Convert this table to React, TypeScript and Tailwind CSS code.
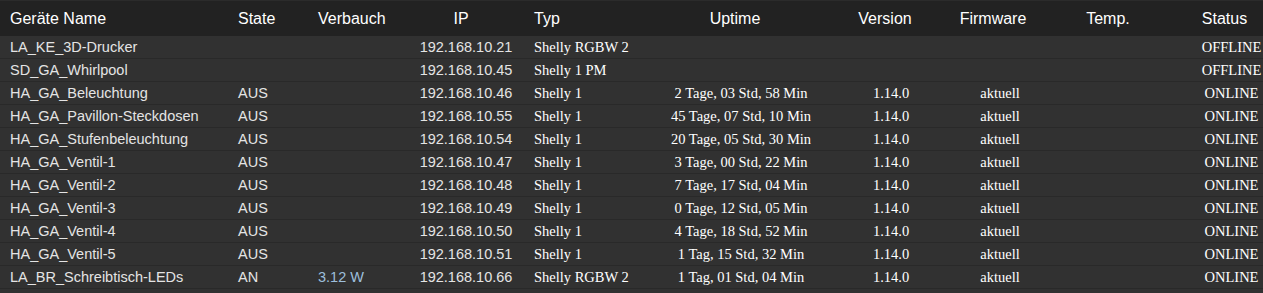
import React from "react";

type Device = {
  name: string;
  state?: string;
  power?: string;
  ip: string;
  typ: string;
  uptime?: string;
  version?: string;
  firmware?: string;
  status: string;
};

const devices: Device[] = [
  { name: "LA_KE_3D-Drucker", ip: "192.168.10.21", typ: "Shelly RGBW 2", status: "OFFLINE" },
  { name: "SD_GA_Whirlpool", ip: "192.168.10.45", typ: "Shelly 1 PM", status: "OFFLINE" },
  { name: "HA_GA_Beleuchtung", state: "AUS", ip: "192.168.10.46", typ: "Shelly 1", uptime: "2 Tage, 03 Std, 58 Min", version: "1.14.0", firmware: "aktuell", status: "ONLINE" },
  { name: "HA_GA_Pavillon-Steckdosen", state: "AUS", ip: "192.168.10.55", typ: "Shelly 1", uptime: "45 Tage, 07 Std, 10 Min", version: "1.14.0", firmware: "aktuell", status: "ONLINE" },
  { name: "HA_GA_Stufenbeleuchtung", state: "AUS", ip: "192.168.10.54", typ: "Shelly 1", uptime: "20 Tage, 05 Std, 30 Min", version: "1.14.0", firmware: "aktuell", status: "ONLINE" },
  { name: "HA_GA_Ventil-1", state: "AUS", ip: "192.168.10.47", typ: "Shelly 1", uptime: "3 Tage, 00 Std, 22 Min", version: "1.14.0", firmware: "aktuell", status: "ONLINE" },
  { name: "HA_GA_Ventil-2", state: "AUS", ip: "192.168.10.48", typ: "Shelly 1", uptime: "7 Tage, 17 Std, 04 Min", version: "1.14.0", firmware: "aktuell", status: "ONLINE" },
  { name: "HA_GA_Ventil-3", state: "AUS", ip: "192.168.10.49", typ: "Shelly 1", uptime: "0 Tage, 12 Std, 05 Min", version: "1.14.0", firmware: "aktuell", status: "ONLINE" },
  { name: "HA_GA_Ventil-4", state: "AUS", ip: "192.168.10.50", typ: "Shelly 1", uptime: "4 Tage, 18 Std, 52 Min", version: "1.14.0", firmware: "aktuell", status: "ONLINE" },
  { name: "HA_GA_Ventil-5", state: "AUS", ip: "192.168.10.51", typ: "Shelly 1", uptime: "1 Tag, 15 Std, 32 Min", version: "1.14.0", firmware: "aktuell", status: "ONLINE" },
  { name: "LA_BR_Schreibtisch-LEDs", state: "AN", power: "3.12 W", ip: "192.168.10.66", typ: "Shelly RGBW 2", uptime: "1 Tag, 01 Std, 04 Min", version: "1.14.0", firmware: "aktuell", status: "ONLINE" },
];

const cols = "grid grid-cols-[228px_80px_100px_116px_116px_200px_100px_120px_140px_63px]";
const sans = "font-['Liberation_Sans',Arial,sans-serif]";
const serif = "font-['Liberation_Serif','Times_New_Roman',serif]";

export default function App() {
  return (
    <div className="h-[293px] w-[1263px] overflow-hidden bg-[#313131]">
      <div className={`${cols} ${sans} h-9 items-center border-t border-[#2b2b2b] bg-[#222222] text-[16px] text-white`}>
        <div className="pl-[10px]">Geräte Name</div>
        <div className="pl-[10px]">State</div>
        <div className="pl-[10px]">Verbauch</div>
        <div className="pr-[10px] text-center">IP</div>
        <div className="pl-[10px]">Typ</div>
        <div className="pr-[10px] text-center">Uptime</div>
        <div className="pr-[10px] text-center">Version</div>
        <div className="pr-[14px] text-center">Firmware</div>
        <div className="pr-[44px] text-center">Temp.</div>
        <div className="pr-[14px] text-center">Status</div>
      </div>
      {devices.map((d) => (
        <div key={d.name} className={`${cols} h-[23px] items-center border-b border-[#292929] text-[14.5px] leading-none`}>
          <div className={`${sans} pl-[10px] text-[#e4e4e4]`}>{d.name}</div>
          <div className={`${sans} pl-[10px] text-[#e4e4e4]`}>{d.state}</div>
          <div className={`${sans} pl-[10px] text-[#9dbfdc]`}>{d.power}</div>
          <div className={`${sans} text-center text-[#e4e4e4]`}>{d.ip}</div>
          <div className={`${serif} pl-[10px] text-white`}>{d.typ}</div>
          <div className={`${serif} pl-[2px] text-center text-white`}>{d.uptime}</div>
          <div className={`${serif} pl-[2px] text-center text-white`}>{d.version}</div>
          <div className={`${serif} text-center text-white`}>{d.firmware}</div>
          <div />
          <div className={`${serif} text-center text-white`}>{d.status}</div>
        </div>
      ))}
    </div>
  );
}
